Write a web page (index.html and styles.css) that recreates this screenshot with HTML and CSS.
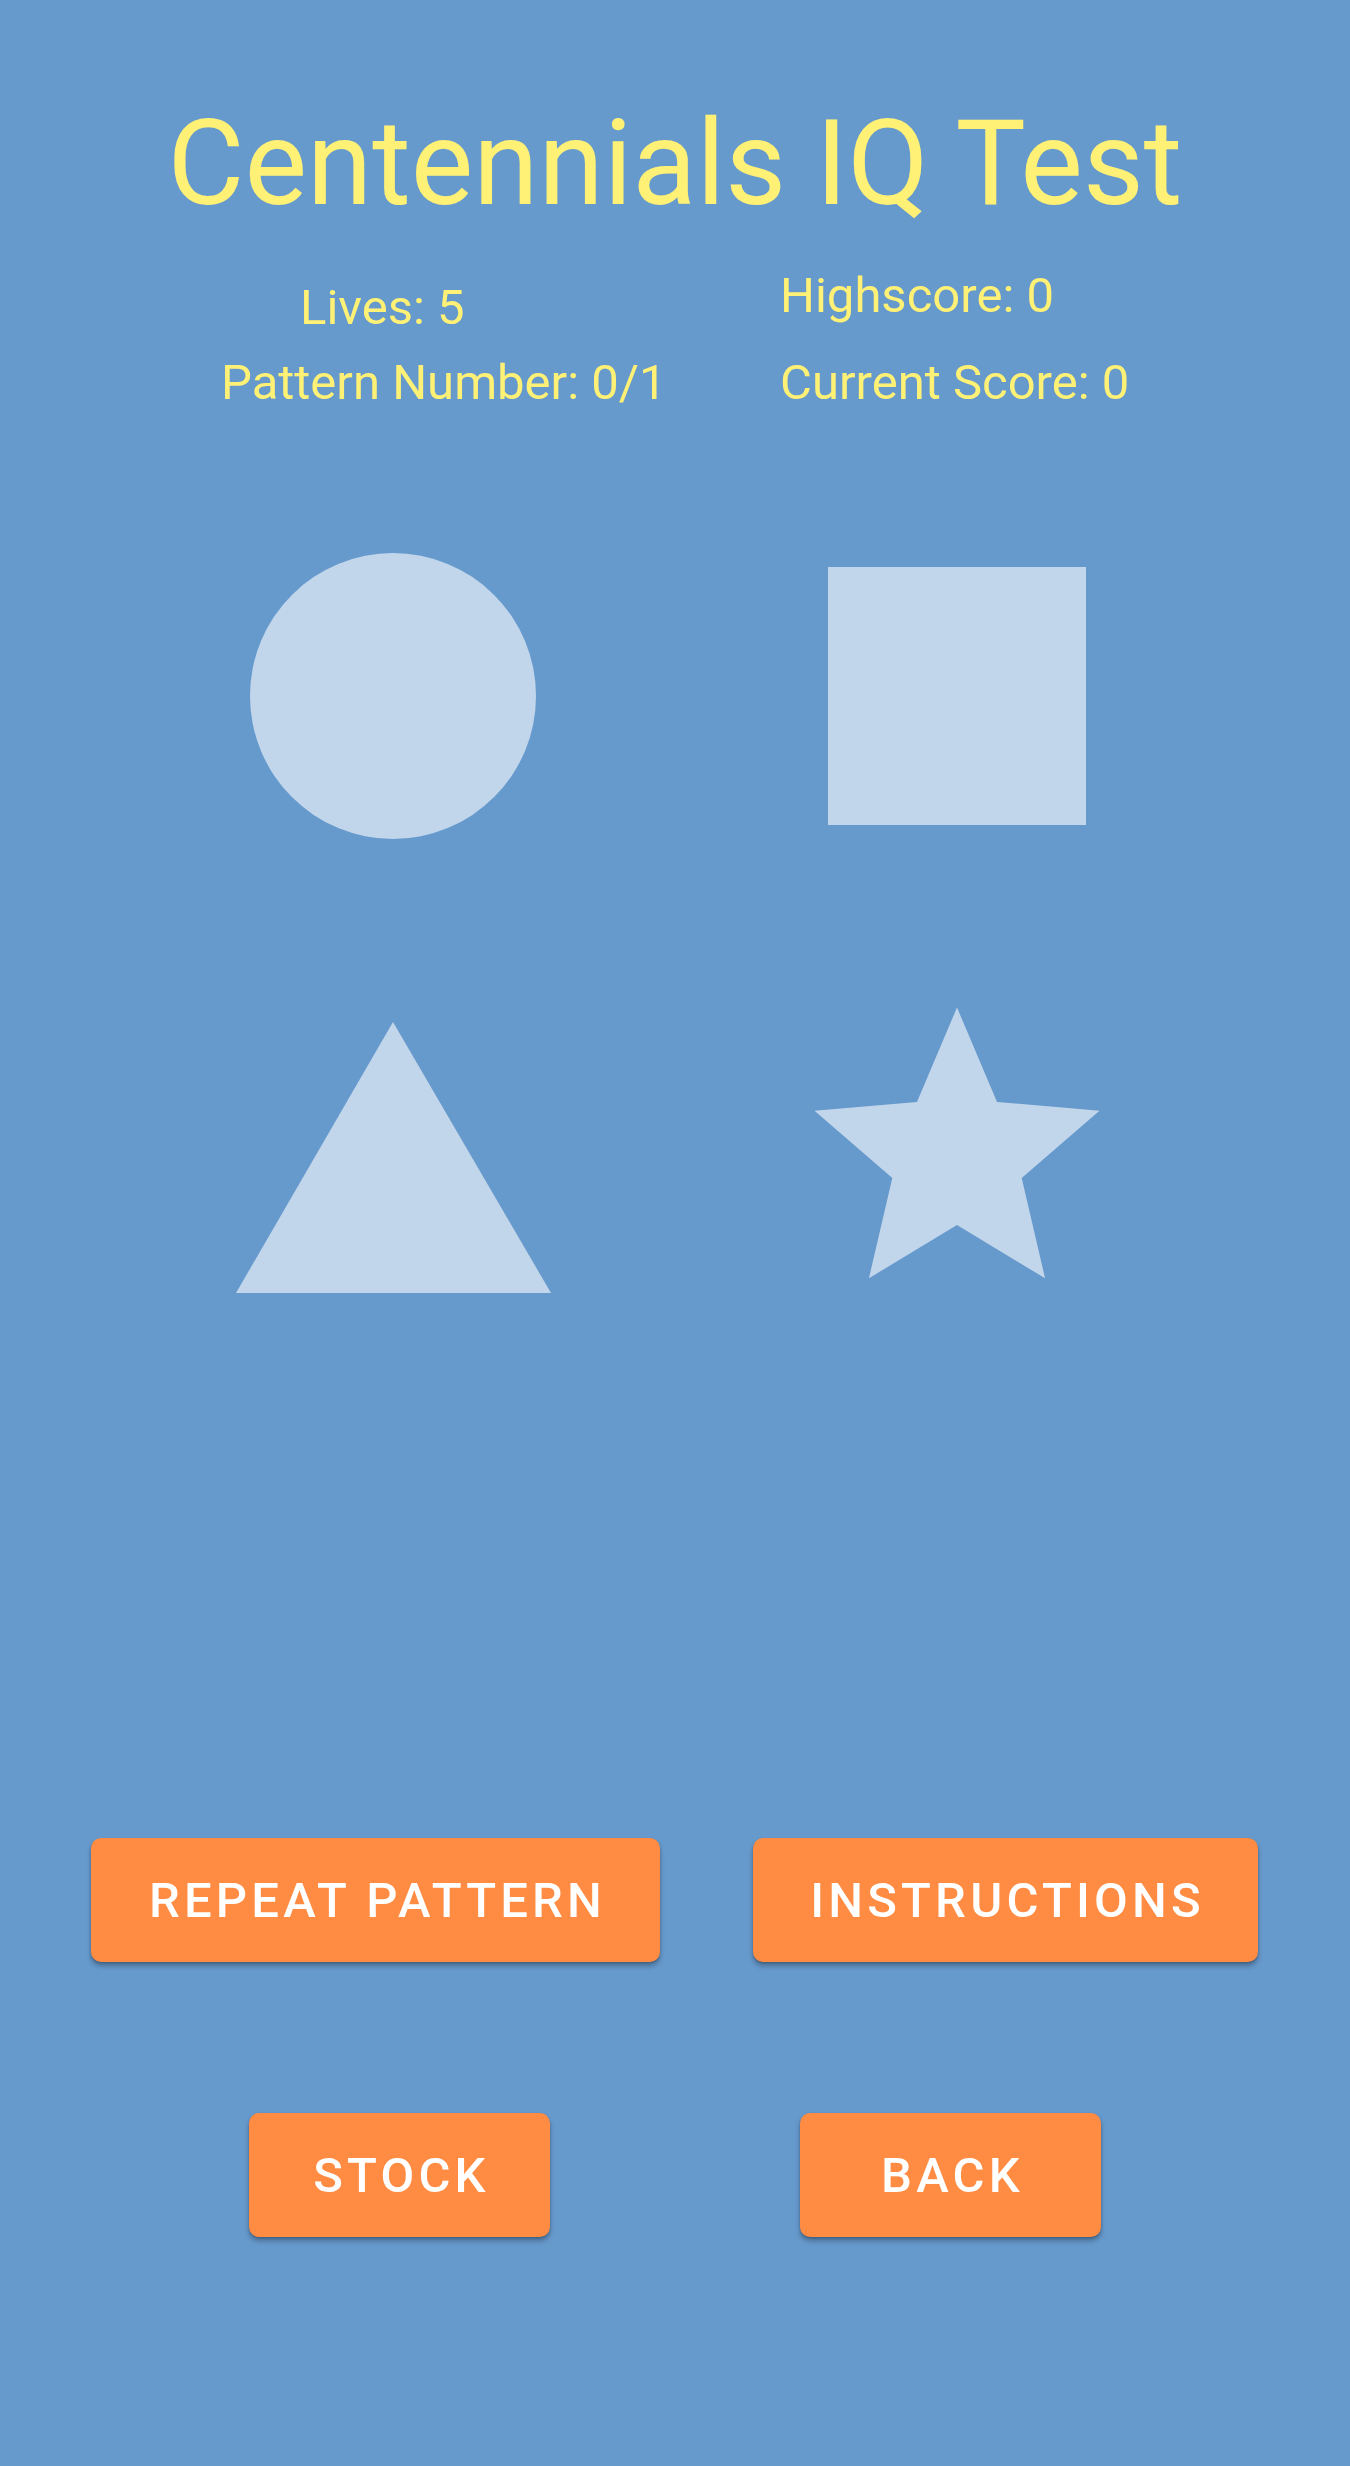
FILE: index.html
```html
<!DOCTYPE html>
<html lang="en">
<head>
<meta charset="utf-8">
<title>Centennials IQ Test</title>
<link rel="stylesheet" href="styles.css">
</head>
<body>
<main class="screen">
  <h1 class="title">Centennials IQ Test</h1>

  <section class="stats">
    <div class="stats-col stats-left">
      <p class="stat stat-lives">Lives: 5</p>
      <p class="stat stat-pattern">Pattern Number: 0/1</p>
    </div>
    <div class="stats-col stats-right">
      <p class="stat stat-high">Highscore: 0</p>
      <p class="stat stat-current">Current Score: 0</p>
    </div>
  </section>

  <section class="shapes">
    <svg class="shape" viewBox="0 0 342 342" aria-label="circle">
      <circle cx="171" cy="171" r="143"/>
    </svg>
    <svg class="shape" viewBox="0 0 342 342" aria-label="square">
      <rect x="42" y="42" width="258" height="258"/>
    </svg>
    <svg class="shape" viewBox="0 0 342 342" aria-label="triangle">
      <polygon points="171,43 329,314 14,314"/>
    </svg>
    <svg class="shape" viewBox="0 0 24 24" aria-label="star">
      <path d="M12,17.27L18.18,21l-1.64,-7.03L22,9.24l-7.19,-0.61L12,2 9.19,8.63 2,9.24l5.46,4.73L5.82,21z"/>
    </svg>
  </section>

  <section class="buttons">
    <div class="btn-row btn-row-top">
      <button class="btn btn-repeat">Repeat Pattern</button>
      <button class="btn btn-instructions">Instructions</button>
    </div>
    <div class="btn-row btn-row-bottom">
      <button class="btn btn-small">Stock</button>
      <button class="btn btn-small">Back</button>
    </div>
  </section>
</main>
</body>
</html>
```

FILE: styles.css
```css
* {
  box-sizing: border-box;
}

html, body {
  margin: 0;
  padding: 0;
}

body {
  background: #6699cc;
  font-family: Roboto, "Noto Sans", "Liberation Sans", sans-serif;
}

.screen {
  width: 1350px;
  height: 2466px;
  background: #6699cc;
  overflow: hidden;
}

.title {
  margin: 96px 0 0 0;
  font-weight: 400;
  font-size: 118px;
  line-height: 137px;
  height: 137px;
  text-align: center;
  color: #fff176;
  letter-spacing: 0;
}

.stats {
  display: flex;
  height: 179px;
}

.stat {
  margin: 0;
  font-size: 49px;
  line-height: 58px;
  color: #fff176;
  white-space: nowrap;
}

.stats-left {
  width: 780px;
  display: flex;
  flex-direction: column;
  padding-top: 46px;
}

.stat-lives {
  margin-left: 300px;
}

.stat-pattern {
  margin-left: 221px;
  margin-top: 17px;
}

.stats-right {
  display: flex;
  flex-direction: column;
  padding-top: 34px;
}

.stat-current {
  margin-top: 29px;
}

.shapes {
  display: grid;
  grid-template-columns: 342px 342px;
  column-gap: 222px;
  row-gap: 112px;
  margin: 113px 0 0 222px;
}

.shape {
  display: block;
  width: 342px;
  height: 342px;
  fill: #c2d6eb;
}

.buttons {
  margin-top: 517px;
  display: flex;
  flex-direction: column;
  gap: 151px;
}

.btn-row {
  display: flex;
}

.btn-row-top {
  padding-left: 91px;
  gap: 93px;
}

.btn-row-bottom {
  padding-left: 249px;
  gap: 250px;
}

.btn {
  height: 124px;
  border: 0;
  border-radius: 10px;
  background: #ff8c42;
  color: #ffffff;
  font-family: Roboto, "Noto Sans", "Liberation Sans", sans-serif;
  font-weight: 500;
  font-size: 49px;
  letter-spacing: 4.2px;
  text-transform: uppercase;
  padding: 0 0 0 4px;
  display: flex;
  align-items: center;
  justify-content: center;
  box-shadow: 0 4px 5px rgba(0, 0, 0, 0.28), 0 1px 2px rgba(0, 0, 0, 0.18);
}

.btn-repeat {
  width: 569px;
}

.btn-instructions {
  width: 505px;
}

.btn-small {
  width: 301px;
}
```
